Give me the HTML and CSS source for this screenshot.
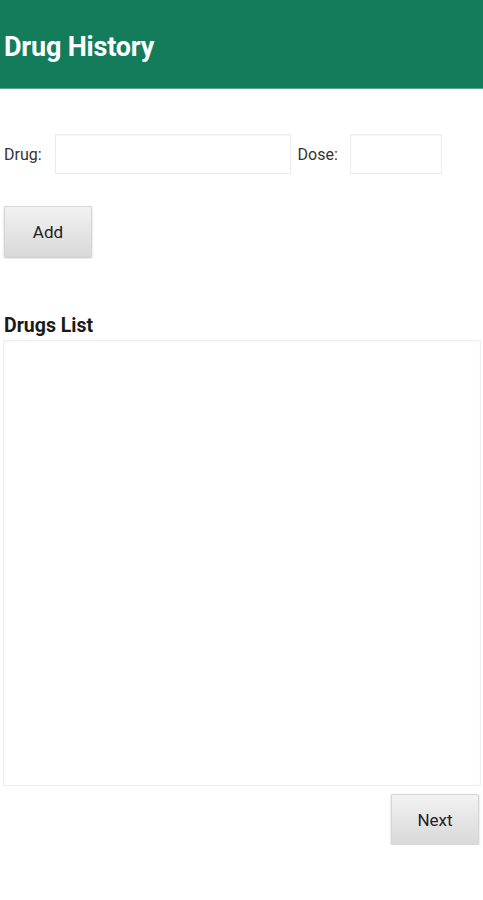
FILE: index.html
```html
<!DOCTYPE html>
<html lang="en">
<head>
  <meta charset="UTF-8">
  <meta name="viewport" content="width=device-width, initial-scale=1.0">
  <title>Drug History</title>
  <link rel="stylesheet" href="styles.css">
</head>
<body>
  <header class="app-bar">
    <h1>Drug History</h1>
  </header>

  <div class="content">
    <div class="entry-row">
      <label for="drug">Drug:</label>
      <input type="text" id="drug" class="drug-input">
      <label for="dose">Dose:</label>
      <input type="text" id="dose" class="dose-input">
    </div>

    <button class="btn add-btn">Add</button>

    <h2 class="list-title">Drugs List</h2>
    <div class="drugs-list"></div>

    <div class="footer">
      <button class="btn next-btn">Next</button>
    </div>
  </div>
</body>
</html>
```

FILE: styles.css
```css
body {
  margin: 0;
  font-family: Roboto, "Liberation Sans", Arial, sans-serif;
  background-color: #fff;
  color: #222;
}
.app-bar {
  height: 89px;
  background-color: #137c5a;
  display: flex;
  align-items: center;
  padding: 5px 4px 0;
  box-sizing: border-box;
  border-bottom: 1px solid #5aa58a;
}
.app-bar h1 {
  margin: 0;
  font-size: 27px;
  font-weight: 700;
  color: #fff;
  letter-spacing: -0.2px;
}
.content {
  padding: 0 2px 0 3px;
}
.entry-row {
  display: flex;
  align-items: center;
  margin-top: 45px;
  padding-left: 1px;
}
.entry-row label {
  font-size: 16px;
  color: #333;
}
.entry-row input {
  height: 40px;
  box-sizing: border-box;
  border: 1px solid #ececec;
  border-radius: 0;
  background: #fff;
  outline: none;
  box-shadow: inset 0 1px 1px rgba(0, 0, 0, 0.03);
}
.drug-input {
  width: 236px;
  margin: 0 7px 0 13px;
}
.dose-input {
  width: 92px;
  margin-left: 12px;
}
.btn {
  font-family: Roboto, "Liberation Sans", Arial, sans-serif;
  font-size: 17px;
  color: #222;
  width: 88px;
  height: 51px;
  border: 1px solid #d6d6d6;
  border-radius: 1px;
  background: linear-gradient(#f2f2f2, #d9d9d9);
  box-shadow: 0 1px 2px rgba(0, 0, 0, 0.25);
  cursor: pointer;
}
.add-btn {
  display: block;
  margin: 32px 0 0 1px;
}
.list-title {
  margin: 57px 0 3px 1px;
  font-size: 19.5px;
  font-weight: 700;
  color: #1a1a1a;
}
.drugs-list {
  height: 444px;
  border: 1px solid #eeeeee;
  box-shadow: inset 0 1px 3px rgba(0, 0, 0, 0.04);
}
.footer {
  display: flex;
  justify-content: flex-end;
  padding-top: 8px;
}
.next-btn {
  margin-right: 2px;
}
```
